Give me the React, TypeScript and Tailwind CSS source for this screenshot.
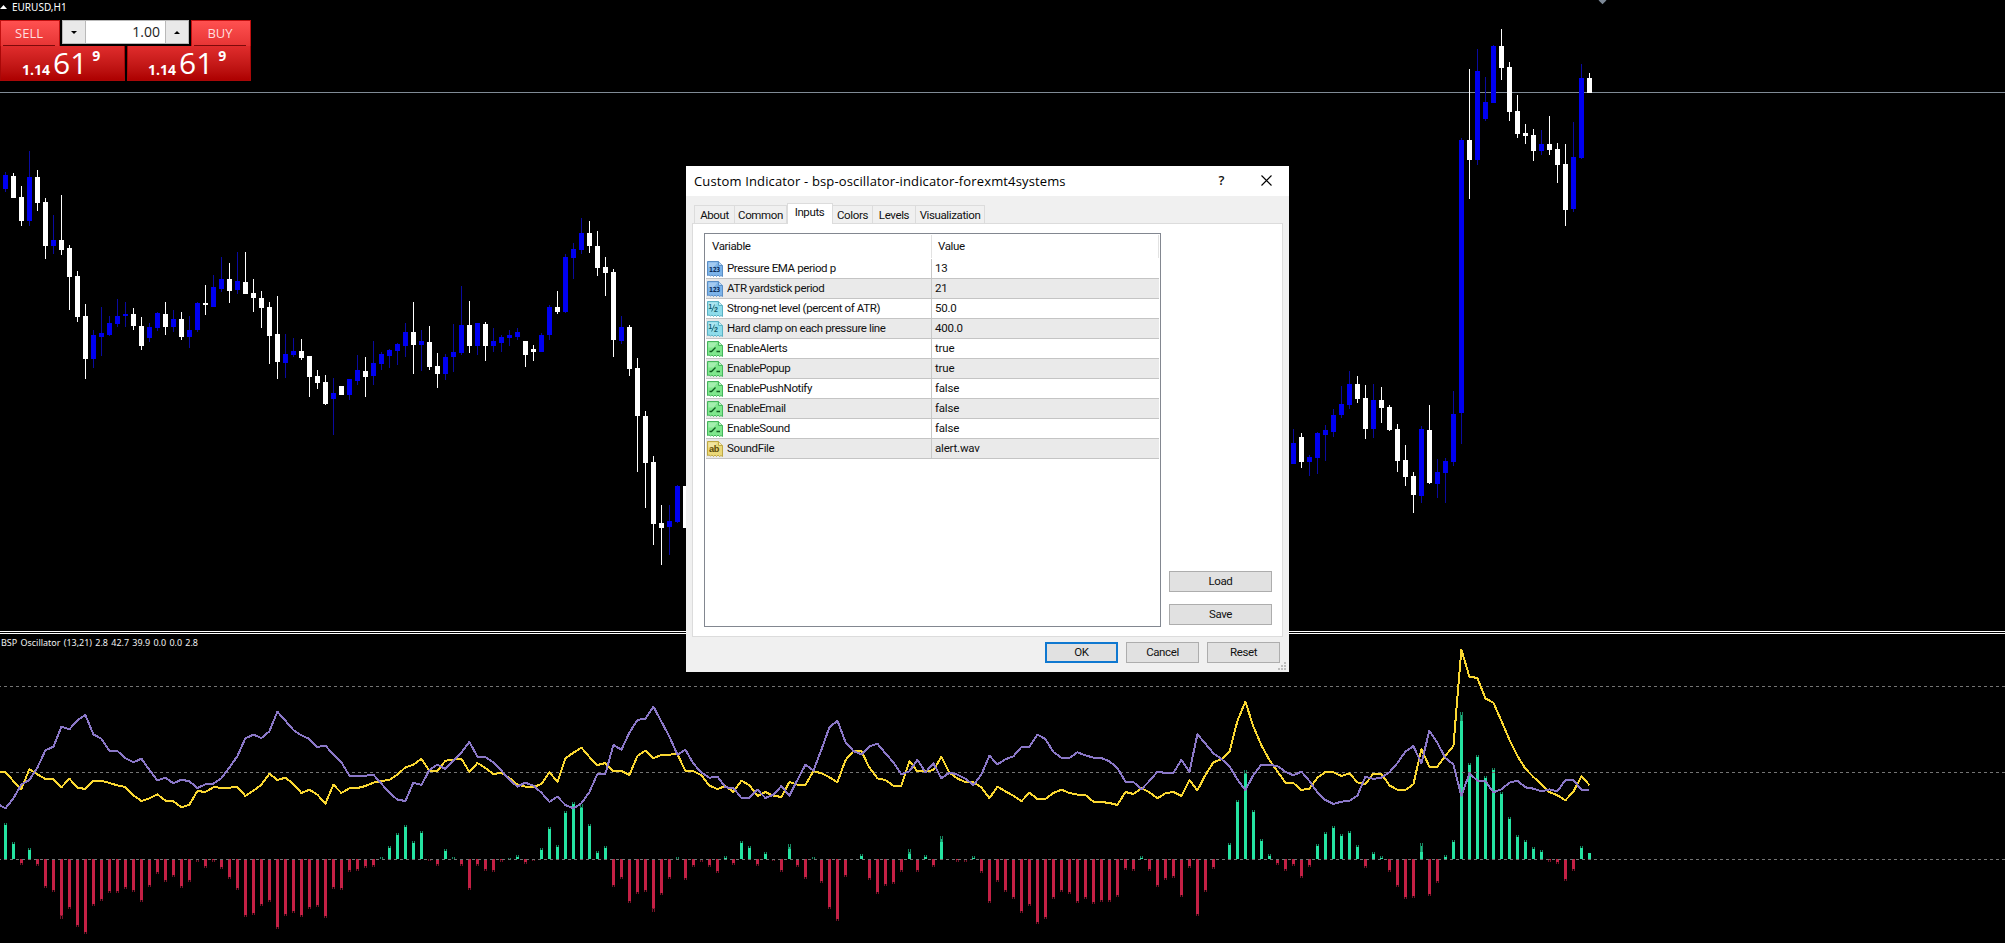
import type { ReactNode } from "react";

type Candle = [kind: "B" | "W", high: number, top: number, bottom: number, low: number];

const BAR_STEP = 8;
const FIRST_BAR = 5;
const RIGHT_BLOCK_START = 161;

const LEFT_CANDLES: Candle[] = [
  ["B", 172, 175, 189, 192], ["W", 173, 176, 198, 198], ["W", 186, 197, 221, 226], ["B", 151, 177, 221, 226],
  ["W", 170, 177, 203, 211], ["W", 198, 202, 246, 259], ["B", 215, 240, 246, 254], ["W", 195, 240, 250, 255],
  ["W", 245, 248, 277, 310], ["W", 271, 276, 317, 322], ["W", 304, 316, 359, 379], ["B", 330, 335, 359, 368],
  ["B", 307, 333, 337, 356], ["B", 316, 323, 335, 336], ["B", 299, 316, 324, 327], ["B", 302, 314, 316, 327],
  ["W", 308, 314, 326, 330], ["W", 317, 326, 346, 350], ["B", 323, 327, 338, 342], ["B", 312, 313, 328, 331],
  ["W", 302, 314, 327, 335], ["B", 310, 319, 327, 332], ["W", 312, 319, 337, 340], ["B", 316, 330, 337, 348],
  ["B", 302, 303, 330, 332], ["W", 285, 303, 305, 315], ["B", 275, 287, 307, 307], ["B", 257, 279, 289, 292],
  ["W", 263, 279, 291, 303], ["B", 252, 281, 290, 294], ["W", 252, 282, 294, 294], ["W", 279, 293, 298, 312],
  ["W", 291, 298, 308, 328], ["W", 302, 307, 336, 364], ["W", 296, 334, 362, 379], ["B", 334, 354, 363, 378],
  ["B", 338, 351, 355, 357], ["W", 339, 351, 358, 360], ["W", 356, 356, 377, 397], ["W", 370, 376, 383, 389],
  ["W", 375, 382, 404, 405], ["B", 378, 393, 399, 435], ["W", 386, 386, 395, 395], ["B", 379, 379, 395, 400],
  ["B", 355, 370, 381, 385], ["W", 357, 371, 377, 397], ["B", 341, 363, 376, 385], ["B", 352, 354, 364, 370],
  ["B", 349, 350, 356, 368], ["B", 343, 344, 351, 365], ["B", 323, 332, 346, 357], ["W", 302, 332, 345, 374],
  ["B", 330, 341, 345, 371], ["W", 326, 342, 367, 370], ["W", 353, 366, 374, 388], ["B", 354, 357, 374, 380],
  ["B", 324, 352, 357, 372], ["B", 286, 325, 353, 355], ["W", 301, 325, 346, 353], ["B", 323, 323, 346, 355],
  ["W", 322, 324, 346, 361], ["B", 328, 341, 346, 352], ["B", 335, 337, 343, 352], ["B", 330, 335, 338, 346],
  ["B", 328, 332, 337, 340], ["W", 341, 341, 355, 367], ["W", 345, 349, 352, 361], ["B", 333, 335, 352, 352],
  ["B", 305, 307, 335, 340], ["W", 291, 307, 312, 314], ["B", 254, 257, 312, 313], ["B", 243, 249, 258, 279],
  ["B", 218, 233, 250, 254], ["W", 221, 233, 246, 253], ["W", 231, 246, 268, 276], ["W", 257, 267, 273, 296],
  ["W", 269, 272, 340, 357], ["B", 316, 327, 341, 344], ["W", 325, 327, 369, 376], ["W", 358, 368, 416, 472],
  ["W", 411, 416, 463, 508], ["W", 456, 462, 524, 545], ["W", 505, 523, 528, 565], ["B", 505, 521, 527, 555],
  ["B", 485, 486, 522, 523], ["W", 486, 486, 528, 528],
];

const RIGHT_CANDLES: Candle[] = [
  ["B", 429, 443, 464, 464], ["W", 433, 437, 462, 468], ["B", 455, 457, 462, 476], ["B", 432, 433, 458, 474],
  ["B", 425, 430, 435, 461], ["B", 409, 415, 432, 437], ["B", 386, 404, 415, 418], ["B", 371, 384, 405, 409],
  ["W", 376, 384, 399, 403], ["W", 385, 398, 429, 439], ["B", 384, 400, 429, 438], ["W", 387, 400, 408, 423],
  ["W", 405, 407, 430, 431], ["W", 424, 429, 461, 472], ["W", 445, 460, 477, 486], ["W", 472, 476, 495, 513],
  ["B", 426, 429, 496, 503], ["W", 405, 430, 483, 484], ["B", 459, 472, 484, 498], ["B", 458, 461, 473, 503],
  ["B", 391, 414, 462, 466], ["B", 138, 140, 413, 444], ["W", 69, 140, 160, 199], ["B", 49, 71, 160, 165],
  ["B", 77, 102, 119, 121], ["B", 45, 46, 103, 103], ["W", 29, 46, 68, 80], ["W", 62, 67, 112, 121],
  ["W", 95, 111, 134, 138], ["W", 124, 133, 136, 144], ["W", 129, 135, 151, 161], ["B", 130, 144, 151, 155],
  ["W", 116, 144, 150, 155], ["W", 143, 149, 165, 183], ["W", 144, 164, 210, 226], ["B", 122, 157, 209, 212],
  ["B", 64, 78, 158, 159], ["W", 73, 78, 93, 93],
];

// Oscillator samples are kept in thirds of a pixel; the pane starts at 42.
const PANE_OFFSET = 42;
const ZERO = 718;

const BEARS = [
  565, 535, 493, 480, 443, 391, 380, 320, 328, 301, 285, 343, 356, 393, 393, 415, 427, 416, 450, 481,
  473, 490, 479, 484, 504, 493, 491, 475, 443, 408, 355, 344, 354, 334, 275, 302, 330, 346, 357, 381,
  377, 403, 427, 467, 467, 467, 464, 491, 518, 539, 543, 488, 495, 450, 434, 447, 423, 397, 366, 410,
  411, 427, 452, 479, 500, 488, 497, 518, 546, 530, 555, 565, 550, 516, 462, 461, 375, 389, 338, 300,
  296, 260, 305, 350, 404, 389, 431, 457, 473, 470, 502, 504, 534, 534, 509, 534, 524, 498, 527, 480,
  434, 452, 389, 322, 302, 366, 393, 403, 379, 371, 400, 427, 463, 454, 419, 457, 430, 475, 458, 464,
  476, 495, 463, 407, 433, 418, 409, 381, 380, 344, 357, 396, 413, 414, 397, 406, 413, 414, 424, 444,
  485, 486, 508, 483, 455, 459, 459, 419, 456, 343, 371, 400, 417, 438, 479, 510, 465, 434, 435, 438,
  455, 466, 455, 483, 517, 540, 552, 545, 543, 527, 470, 477, 473, 457, 429, 395, 378, 430, 332, 369,
  414, 433, 528, 460, 482, 483, 517, 508, 488, 482, 502, 506, 514, 508, 514, 480, 480, 509, 510,
];

const BULLS = [
  457, 483, 507, 447, 463, 477, 478, 502, 476, 503, 507, 483, 482, 489, 496, 501, 526, 543, 535, 523,
  542, 544, 562, 554, 513, 516, 502, 503, 503, 501, 528, 512, 494, 461, 480, 473, 492, 519, 509, 524,
  551, 494, 519, 505, 504, 498, 488, 483, 480, 464, 442, 434, 416, 453, 454, 422, 419, 416, 456, 429,
  444, 462, 459, 474, 494, 500, 501, 492, 456, 486, 415, 398, 383, 411, 435, 429, 453, 453, 465, 408,
  392, 414, 405, 404, 402, 453, 454, 466, 497, 507, 498, 516, 482, 496, 528, 516, 527, 531, 486, 494,
  495, 453, 460, 472, 487, 421, 393, 394, 443, 475, 480, 497, 497, 423, 454, 453, 451, 410, 458, 476,
  486, 487, 502, 535, 500, 514, 527, 544, 518, 537, 537, 519, 509, 519, 524, 525, 545, 546, 549, 555,
  516, 522, 505, 517, 535, 520, 516, 528, 480, 511, 465, 427, 418, 396, 303, 245, 320, 376, 420, 454,
  488, 489, 510, 506, 473, 456, 457, 468, 460, 487, 492, 461, 461, 496, 509, 510, 493, 387, 440, 440,
  407, 378, 89, 170, 174, 235, 248, 303, 359, 408, 446, 471, 493, 516, 526, 541, 515, 469, 495,
];

const NET = [
  609, 666, 735, 684, 738, 803, 815, 898, 866, 920, 941, 857, 844, 818, 819, 806, 815, 845, 800, 762,
  785, 770, 803, 785, 725, 743, 725, 748, 777, 809, 892, 886, 857, 845, 926, 887, 879, 892, 868, 860,
  895, 808, 811, 756, 753, 744, 740, 711, 678, 640, 615, 663, 633, 724, 738, 687, 711, 738, 811, 739,
  753, 755, 725, 714, 705, 731, 722, 684, 622, 675, 573, 547, 551, 612, 693, 678, 800, 777, 848, 823,
  815, 875, 824, 776, 711, 781, 740, 727, 741, 758, 708, 734, 663, 678, 737, 696, 722, 755, 672, 740,
  778, 711, 789, 868, 902, 770, 718, 702, 779, 821, 798, 791, 755, 687, 755, 705, 740, 648, 718, 725,
  727, 708, 758, 848, 787, 815, 836, 878, 858, 911, 896, 838, 815, 821, 848, 838, 851, 846, 845, 830,
  750, 754, 708, 752, 800, 779, 774, 830, 745, 887, 815, 746, 718, 669, 540, 450, 570, 657, 702, 735,
  752, 739, 773, 740, 672, 636, 618, 642, 633, 675, 743, 696, 708, 755, 800, 836, 833, 669, 828, 788,
  705, 660, 277, 429, 405, 467, 445, 515, 591, 645, 660, 681, 690, 727, 731, 782, 752, 678, 700,
];

// Bars whose solid part stops further from the tip than the usual 2px.
const TIP_LENGTH: Record<number, number> = { 7: 4, 72: 4, 81: 4, 98: 5, 113: 5, 117: 6, 155: 4, 177: 9, 182: 9, 198: 0 };

const barX = (i: number) => FIRST_BAR + i * BAR_STEP;
const paneY = (v: number) => (v - PANE_OFFSET) / 3;

function Candles({ data, start }: { data: Candle[]; start: number }) {
  return (
    <g shapeRendering="crispEdges">
      {data.map(([kind, high, top, bottom, low], i) => {
        const x = barX(start + i);
        return (
          <g key={i}>
            <rect x={x} y={high} width={1} height={low - high} fill={kind === "B" ? "#0a0aa0" : "#fff"} />
            <rect x={x - 2} y={top} width={5} height={bottom - top} fill={kind === "B" ? "#0000f0" : "#fff"} />
          </g>
        );
      })}
    </g>
  );
}

function PriceChart() {
  return (
    <svg width={2005} height={631} className="block">
      <rect x={0} y={92} width={2005} height={1} fill="#808b96" />
      <Candles data={LEFT_CANDLES} start={0} />
      <Candles data={RIGHT_CANDLES} start={RIGHT_BLOCK_START} />
      <path d="M1598.5 0h8l-1 1.2-3 3-3-3z" fill="#7c8896" />
    </svg>
  );
}

function Histogram() {
  return (
    <g shapeRendering="crispEdges">
      {NET.map((v, i) => {
        if (v === ZERO) return null;
        const x = barX(i);
        const up = v < ZERO;
        const zero = 225;
        const tip = Math.round(paneY(v));
        const gap = TIP_LENGTH[i] ?? 2;
        const length = Math.abs(tip - zero);
        const solid = Math.max(length - gap, 0);
        const fill = up ? "#25e4a2" : "#c42045";
        const tipH = Math.min(gap, length);
        const tipY = up ? tip : tip - tipH;
        return (
          <g key={i} fill={fill}>
            <rect x={x - 1} y={up ? zero - solid : zero} width={3} height={solid} />
            <rect x={x - 1} y={tipY} width={1} height={tipH} opacity={0.6} />
            <rect x={x + 1} y={tipY} width={1} height={tipH} opacity={0.6} />
            {gap > 2 && <rect x={x} y={up ? tip + 3 : tip - gap} width={1} height={gap - 3} opacity={0.8} />}
          </g>
        );
      })}
    </g>
  );
}

function linePoints(first: number, values: number[]) {
  return [`0,${paneY(first)}`, ...values.map((v, i) => `${barX(i) + 0.4},${paneY(v)}`)].join(" ");
}

function Oscillator() {
  return (
    <svg width={2005} height={309} className="block">
      <Histogram />
      <g stroke="#747474" strokeDasharray="3 3" strokeDashoffset={2} shapeRendering="crispEdges">
        <line x1={0} x2={2005} y1={52.5} y2={52.5} />
        <line x1={0} x2={2005} y1={138.5} y2={138.5} />
        <line x1={0} x2={2005} y1={225.5} y2={225.5} />
      </g>
      <g fill="none" strokeWidth={2} strokeLinejoin="round" shapeRendering="crispEdges">
        <polyline points={linePoints(455, BULLS)} stroke="#fad732" />
        <polyline points={linePoints(556, BEARS)} stroke="#8b78c8" />
      </g>
      <text x={1} y={12} fill="#f2f2f2" fontSize={9.5} wordSpacing={1} textLength={197} lengthAdjust="spacingAndGlyphs" fontFamily="'Noto Sans', sans-serif">
        BSP Oscillator (13,21) 2.8 42.7 39.9 0.0 0.0 2.8
      </text>
    </svg>
  );
}

function Quote() {
  return (
    <span className="flex items-start text-white">
      <span className="mt-[17px] text-[14px] leading-[14px] font-bold">1.14</span>
      <span className="ml-[3px] mt-[3px] text-[30px] leading-[28px]">61</span>
      <span className="ml-[5px] mt-[3px] text-[14px] leading-[14px] font-bold">9</span>
    </span>
  );
}

function OneClickPanel() {
  return (
    <div className="absolute left-0 top-0 w-[251px] font-['Open_Sans',sans-serif] text-white">
      <div className="flex h-5 items-center">
        <svg width={7} height={4} className="mt-[-6px]">
          <path d="M0 4l3.5-4L7 4z" fill="#fff" />
        </svg>
        <span className="ml-[5px] mt-[-7px] font-['Noto_Sans',sans-serif] text-[10px] leading-none">EURUSD,H1</span>
      </div>
      <div className="flex h-[26px] items-start">
        <div className="flex h-[26px] w-[60px] flex-col items-center border border-b-0 border-[#c01010] bg-gradient-to-b from-[#ff5050] to-[#e63434] pr-[2px]">
          <span className="mt-[3px] text-[13px] leading-[19px] text-[#ffdede]">SELL</span>
          <span className="mt-[2px] h-px w-[52px] shrink-0 bg-[#7d0a0a]" />
        </div>
        <div className="ml-[2px] flex h-6 w-[127px] border border-[#b9b9b9] bg-white">
          <div className="flex w-[22px] items-center justify-center bg-[#e9e9e9]">
            <svg width={6} height={3}><path d="M0 0h6L3 3z" fill="#000" /></svg>
          </div>
          <div className="flex flex-1 items-center justify-end border-x border-[#b9b9b9] pr-[5px] text-[14px] leading-none text-[#222]">
            1.00
          </div>
          <div className="flex w-[22px] items-center justify-center bg-[#e9e9e9]">
            <svg width={6} height={3}><path d="M0 3h6L3 0z" fill="#000" /></svg>
          </div>
        </div>
        <div className="ml-[2px] flex h-[26px] w-[60px] flex-col items-center border border-b-0 border-[#c01010] bg-gradient-to-b from-[#ff5050] to-[#e63434] pr-[2px]">
          <span className="mt-[3px] text-[13px] leading-[19px] text-[#ffdede]">BUY</span>
          <span className="mt-[2px] h-px w-[52px] shrink-0 bg-[#7d0a0a]" />
        </div>
      </div>
      <div className="flex gap-[2px]">
        <div className="flex h-[35px] w-[125px] border border-t-0 border-[#a80808] bg-gradient-to-b from-[#e02c2c] to-[#ad0000] pl-[21px]">
          <Quote />
        </div>
        <div className="flex h-[35px] w-[124px] border border-t-0 border-[#a80808] bg-gradient-to-b from-[#e02c2c] to-[#ad0000] pl-[20px]">
          <Quote />
        </div>
      </div>
    </div>
  );
}

type IconKind = "int" | "double" | "bool" | "string";

const ICON_COLORS: Record<IconKind, { fill: string; edge: string; ink: string }> = {
  int: { fill: "#7db4ea", edge: "#5b8fc6", ink: "#0d2f5c" },
  double: { fill: "#8edcea", edge: "#5bb2c4", ink: "#14596b" },
  bool: { fill: "#7fe78d", edge: "#45b55c", ink: "#0c5a1e" },
  string: { fill: "#ead878", edge: "#bfa945", ink: "#5a4a08" },
};

function TypeIcon({ kind }: { kind: IconKind }) {
  const { fill, edge, ink } = ICON_COLORS[kind];
  return (
    <svg width={16} height={16} viewBox="0 0 16 16" className="shrink-0">
      <path d="M.5.5h11l4 4v11l-1.5-1-1.5 1-1.5-1.5-1.5 1.5-1.5-1.5-1.5 1.5L5 14l-1.5 1L2 14 .5 14.5z" fill={fill} stroke={edge} />
      <path d="M1.5 1.5h9l-4 5h-5z" fill="#fff" opacity={0.3} />
      <path d="M11.5.5v4h4" fill="#fff" fillOpacity={0.5} stroke={edge} />
      {kind === "bool" && <path d="M2.5 10.5h2l4-4M9.5 10.5h3.5" fill="none" stroke={ink} strokeWidth={1.3} />}
      {kind === "int" && (
        <text x={2} y={10.8} fontSize={7} fontWeight={700} fill={ink} textLength={11} lengthAdjust="spacingAndGlyphs" fontFamily="'DejaVu Sans', sans-serif">123</text>
      )}
      {kind === "double" && (
        <>
          <text x={1.5} y={8} fontSize={6.5} fontWeight={700} fill={ink} fontFamily="'Liberation Sans', sans-serif">1</text>
          <path d="M4.6 10.5l3-7" stroke={ink} strokeWidth={0.8} />
          <text x={7} y={10.5} fontSize={7} fontWeight={700} fill={ink} fontFamily="'Liberation Sans', sans-serif">2</text>
        </>
      )}
      {kind === "string" && (
        <text x={2} y={11} fontSize={9} fontWeight={700} fill={ink} textLength={10} lengthAdjust="spacingAndGlyphs" fontFamily="'Liberation Sans', sans-serif">ab</text>
      )}
    </svg>
  );
}

const INPUTS: { kind: IconKind; name: string; value: string }[] = [
  { kind: "int", name: "Pressure EMA period p", value: "13" },
  { kind: "int", name: "ATR yardstick period", value: "21" },
  { kind: "double", name: "Strong-net level (percent of ATR)", value: "50.0" },
  { kind: "double", name: "Hard clamp on each pressure line", value: "400.0" },
  { kind: "bool", name: "EnableAlerts", value: "true" },
  { kind: "bool", name: "EnablePopup", value: "true" },
  { kind: "bool", name: "EnablePushNotify", value: "false" },
  { kind: "bool", name: "EnableEmail", value: "false" },
  { kind: "bool", name: "EnableSound", value: "false" },
  { kind: "string", name: "SoundFile", value: "alert.wav" },
];

function InputsTable() {
  return (
    <div className="h-[394px] w-[457px] border border-[#828790] bg-white px-px">
      <div className="flex h-[25px] items-center">
        <div className="flex h-[23px] w-[226px] items-center border-r border-[#e2e2e2] pl-[6px]">Variable</div>
        <div className="flex h-[23px] flex-1 items-center border-r border-[#e2e2e2] pl-[6px]">Value</div>
      </div>
      {INPUTS.map((row, i) => (
        <div key={row.name} className={`flex h-5 border-b border-[#c4c4c4] ${i % 2 ? "bg-[#eaeaea]" : "bg-white"}`}>
          <div className="flex w-[226px] items-center border-r border-[#c8c8c8] pl-px">
            <TypeIcon kind={row.kind} />
            <span className="ml-1">{row.name}</span>
          </div>
          <div className="flex items-center pl-[3px] tracking-[-0.2px]">{row.value}</div>
        </div>
      ))}
    </div>
  );
}

const TABS = [
  { label: "About", width: "w-[41px]" },
  { label: "Common", width: "w-[52px]" },
  { label: "Inputs", width: "w-[46px]" },
  { label: "Colors", width: "w-[40px]" },
  { label: "Levels", width: "w-[43px]" },
  { label: "Visualization", width: "w-[69px]" },
];

function Button({ children, className = "w-[73px]", focused = false }: { children: ReactNode; className?: string; focused?: boolean }) {
  return (
    <button
      type="button"
      className={`flex h-[21px] items-center justify-center bg-[#e1e1e1] ${focused ? "border-2 border-[#0f78d0]" : "border border-[#adadad]"} ${className}`}
    >
      {children}
    </button>
  );
}

function SizeGrip() {
  return (
    <svg width={8} height={8} className="absolute bottom-[2px] right-[3px]" fill="#bdbdbd" shapeRendering="crispEdges">
      <path d="M6 0h2v2h-2zM3 3h2v2h-2zM6 3h2v2h-2zM0 6h2v2h-2zM3 6h2v2h-2zM6 6h2v2h-2z" />
    </svg>
  );
}

function IndicatorDialog() {
  return (
    <div className="absolute left-[686px] top-[166px] flex h-[506px] w-[603px] flex-col bg-[#f0f0f0] font-['Roboto','Liberation_Sans',sans-serif] text-[11.5px] leading-none tracking-[-0.38px] text-[#111]">
      <div className="flex h-[30px] items-center bg-white pl-2 pr-[17px]">
        <span className="flex-1 font-['Open_Sans',sans-serif] text-[13px] tracking-[0.14px] text-black">
          Custom Indicator - bsp-oscillator-indicator-forexmt4systems
        </span>
        <span className="mr-[37px] mt-[-2px] font-['Open_Sans',sans-serif] text-[13px] font-semibold">?</span>
        <svg width={11} height={11} className="mt-[-2px]">
          <path d="M.5.5l10 10M10.5.5l-10 10" stroke="#000" strokeWidth={1.1} />
        </svg>
      </div>
      <div className="mt-[7px] flex h-5 items-end pl-2">
        {TABS.map((tab) =>
          tab.label === "Inputs" ? (
            <div key={tab.label} className={`z-10 mb-[-1px] flex h-[21px] items-center justify-center border border-b-0 border-[#dcdcdc] bg-white pb-[2px] pr-px ${tab.width}`}>
              {tab.label}
            </div>
          ) : (
            <div key={tab.label} className={`flex h-[18px] items-center justify-center whitespace-nowrap border border-b-0 border-l-0 border-[#dcdcdc] pt-[2px] first:border-l ${tab.width}`}>
              {tab.label}
            </div>
          ),
        )}
      </div>
      <div className="ml-[6px] flex h-[414px] w-[591px] border border-[#dcdcdc] bg-white pl-[11px] pt-[9px]">
        <InputsTable />
        <div className="ml-2 flex h-[392px] flex-col justify-end gap-3">
          <Button className="w-[103px]">Load</Button>
          <Button className="w-[103px]">Save</Button>
        </div>
      </div>
      <div className="mt-[5px] flex justify-end gap-2 pr-[9px]">
        <Button focused>OK</Button>
        <Button>Cancel</Button>
        <Button>Reset</Button>
      </div>
      <SizeGrip />
    </div>
  );
}

export default function App() {
  return (
    <div className="relative flex h-[943px] w-[2005px] flex-col overflow-hidden bg-black">
      <PriceChart />
      <div className="h-[3px] shrink-0 border-y border-white" />
      <Oscillator />
      <OneClickPanel />
      <IndicatorDialog />
    </div>
  );
}
